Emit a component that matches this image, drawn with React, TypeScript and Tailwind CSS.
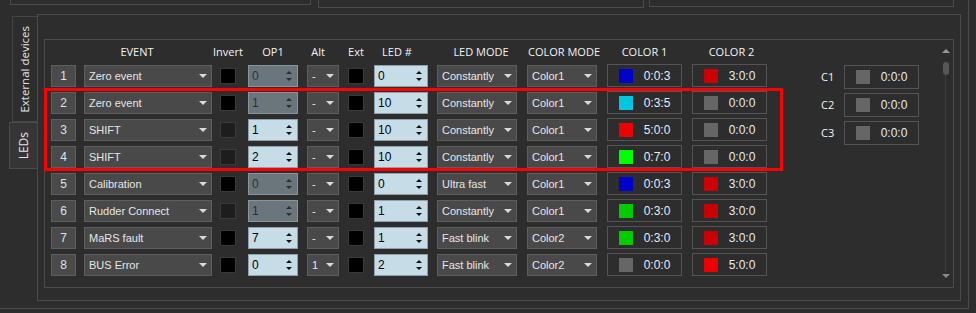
import React from "react";

type Row = {
  event: string;
  invertDim: boolean;
  op1: string;
  op1On: boolean;
  alt: string;
  led: string;
  mode: string;
  colorMode: string;
  c1: [string, string];
  c2: [string, string];
};

const GRAY = "#666666";

const rows: Row[] = [
  { event: "Zero event", invertDim: false, op1: "0", op1On: false, alt: "-", led: "0", mode: "Constantly", colorMode: "Color1", c1: ["#0000cc", "0:0:3"], c2: ["#cc0000", "3:0:0"] },
  { event: "Zero event", invertDim: false, op1: "1", op1On: false, alt: "-", led: "10", mode: "Constantly", colorMode: "Color1", c1: ["#00c6e0", "0:3:5"], c2: [GRAY, "0:0:0"] },
  { event: "SHIFT", invertDim: true, op1: "1", op1On: true, alt: "-", led: "10", mode: "Constantly", colorMode: "Color1", c1: ["#ee0000", "5:0:0"], c2: [GRAY, "0:0:0"] },
  { event: "SHIFT", invertDim: true, op1: "2", op1On: true, alt: "-", led: "10", mode: "Constantly", colorMode: "Color1", c1: ["#00ff00", "0:7:0"], c2: [GRAY, "0:0:0"] },
  { event: "Calibration", invertDim: false, op1: "0", op1On: false, alt: "-", led: "0", mode: "Ultra fast", colorMode: "Color1", c1: ["#0000cc", "0:0:3"], c2: ["#cc0000", "3:0:0"] },
  { event: "Rudder Connect", invertDim: true, op1: "1", op1On: false, alt: "-", led: "1", mode: "Constantly", colorMode: "Color1", c1: ["#00cc00", "0:3:0"], c2: ["#cc0000", "3:0:0"] },
  { event: "MaRS fault", invertDim: false, op1: "7", op1On: true, alt: "-", led: "1", mode: "Fast blink", colorMode: "Color2", c1: ["#00cc00", "0:3:0"], c2: ["#cc0000", "3:0:0"] },
  { event: "BUS Error", invertDim: false, op1: "0", op1On: true, alt: "1", led: "2", mode: "Fast blink", colorMode: "Color2", c1: [GRAY, "0:0:0"], c2: ["#ee0000", "5:0:0"] },
];

function Combo({ w, text }: { w: string; text: string }) {
  return (
    <div className={`${w} h-[22px] flex items-center justify-between bg-[#494949] border border-[#5e5e5e] pl-[4px] pr-[4px] text-[11px] text-[#e6e6e6] whitespace-nowrap`}>
      <span>{text}</span>
      <span className="w-0 h-0 border-x-[4px] border-x-transparent border-t-[4px] border-t-[#dadada]" />
    </div>
  );
}

function Check({ dim }: { dim?: boolean }) {
  return (
    <div className={`w-[16px] h-[16px] border border-[#3a3a3a] ${dim ? "bg-[#1d1d1d]" : "bg-black"}`} />
  );
}

function Spin({ w, value, on }: { w: string; value: string; on: boolean }) {
  const arrow = on ? "#111111" : "#2a2f32";
  return (
    <div
      className={`${w} h-[22px] flex items-center justify-between pl-[3px] pr-[5px] text-[12px] border ${
        on ? "bg-[#c6dde8] border-[#8fa1aa] text-black" : "bg-[#6b767c] border-[#8a959b] text-[#2c3134]"
      }`}
    >
      <span>{value}</span>
      <div className="flex flex-col items-center gap-[4px]">
        <span className="w-0 h-0 border-x-[3px] border-x-transparent border-b-[3px]" style={{ borderBottomColor: arrow }} />
        <span className="w-0 h-0 border-x-[3px] border-x-transparent border-t-[3px]" style={{ borderTopColor: arrow }} />
      </div>
    </div>
  );
}

function ColorBox({ color, value, h = "h-[23px]" }: { color: string; value: string; h?: string }) {
  return (
    <div className={`w-[75px] ${h} self-start flex items-center border border-[#545454] pl-[11px] text-[12px] text-[#e4ecf5]`}>
      <span className="w-[14px] h-[14px] shrink-0" style={{ backgroundColor: color }} />
      <span className="flex-1 text-center">{value}</span>
    </div>
  );
}

function Head({ w, label, extra = "" }: { w: string; label: string; extra?: string }) {
  return <div className={`${w} flex justify-center whitespace-nowrap ${extra}`}>{label}</div>;
}

export default function App() {
  return (
    <div className="relative w-[976px] h-[313px] bg-[#2d2d2d] overflow-hidden font-['Liberation_Sans',Arial,sans-serif]">
      <div className="w-[969px] h-[309px] border-r border-b border-[#4b4b4b] flex flex-col">
        {/* partly visible panels above */}
        <div className="h-[14px] flex shrink-0">
          <div className="ml-[10px] w-[301px] h-[5px] border-x border-b border-[#4b4b4b]" />
          <div className="ml-[7px] w-[326px] h-[8px] border-x border-b border-[#4b4b4b]" />
          <div className="ml-[5px] w-[305px] h-[7px] border-x border-b border-[#4b4b4b]" />
        </div>

        <div className="flex flex-1">
          {/* vertical tabs */}
          <div className="w-[37px] pt-[2px] flex flex-col items-end font-['Open_Sans',sans-serif] text-[11.5px] text-[#e2e2e2]">
            <div className="w-[25px] h-[106px] border-l border-t border-b border-[#454545] flex items-center justify-center">
              <span className="[writing-mode:vertical-rl] rotate-180 whitespace-nowrap">External devices</span>
            </div>
            <div className="w-[28px] h-[47px] bg-[#353535] border-l border-t border-b border-[#4b4b4b] flex items-center justify-center">
              <span className="[writing-mode:vertical-rl] rotate-180 whitespace-nowrap text-[12px]">LEDs</span>
            </div>
          </div>

          {/* tab panel */}
          <div className="w-[924px] h-[287px] border border-[#4b4b4b] pl-[6px] pt-[24px]">
            <div className="w-[910px] h-[249px] border border-[#4b4b4b] flex">
              {/* table */}
              <div className="pl-[6px] flex flex-col">
                <div className="h-[24px] flex items-center font-['Open_Sans',sans-serif] font-medium text-[11px] text-[#f2f2f2]">
                  <Head w="w-[25px]" label="" />
                  <Head w="w-[128px] ml-[8px]" label="EVENT" extra="pr-[22px]" />
                  <Head w="w-[16px] ml-[8px]" label="Invert" />
                  <Head w="w-[50px] ml-[12px]" label="OP1" />
                  <Head w="w-[32px] ml-[9px]" label="Alt" extra="pr-[10px]" />
                  <Head w="w-[16px] ml-[9px]" label="Ext" />
                  <Head w="w-[54px] ml-[10px]" label="LED #" extra="pr-[8px]" />
                  <Head w="w-[80px] ml-[9px]" label="LED MODE" extra="pl-[8px]" />
                  <Head w="w-[70px] ml-[10px]" label="COLOR MODE" extra="pl-[4px]" />
                  <Head w="w-[75px] ml-[10px]" label="COLOR 1" />
                  <Head w="w-[75px] ml-[10px]" label="COLOR 2" extra="pl-[4px]" />
                </div>

                {rows.map((r, i) => (
                  <div key={i} className="h-[24px] mb-[3px] flex items-center">
                    <div className="w-[25px] h-[22px] flex items-center justify-center bg-[#4a4a4a] border border-[#5e5e5e] text-[12px] text-[#d6e4f2]">
                      {i + 1}
                    </div>
                    <div className="ml-[8px]">
                      <Combo w="w-[128px]" text={r.event} />
                    </div>
                    <div className="ml-[8px]">
                      <Check dim={r.invertDim} />
                    </div>
                    <div className="ml-[12px]">
                      <Spin w="w-[50px]" value={r.op1} on={r.op1On} />
                    </div>
                    <div className="ml-[9px]">
                      <Combo w="w-[32px]" text={r.alt} />
                    </div>
                    <div className="ml-[9px]">
                      <Check />
                    </div>
                    <div className="ml-[10px]">
                      <Spin w="w-[54px]" value={r.led} on />
                    </div>
                    <div className="ml-[9px]">
                      <Combo w="w-[80px]" text={r.mode} />
                    </div>
                    <div className="ml-[10px]">
                      <Combo w="w-[70px]" text={r.colorMode} />
                    </div>
                    <div className="ml-[10px] self-start">
                      <ColorBox color={r.c1[0]} value={r.c1[1]} />
                    </div>
                    <div className="ml-[10px] self-start">
                      <ColorBox color={r.c2[0]} value={r.c2[1]} />
                    </div>
                  </div>
                ))}
              </div>

              {/* C1..C3 */}
              <div className="ml-[54px] pt-[25px] flex flex-col gap-[4px]">
                {["C1", "C2", "C3"].map((c) => (
                  <div key={c} className="h-[24px] flex items-center">
                    <span className="w-[23px] font-['Open_Sans',sans-serif] font-medium text-[11px] text-[#f2f2f2]">{c}</span>
                    <div className="w-[75px] h-[24px] flex items-center border border-[#545454] pl-[11px] text-[12px] text-[#e4ecf5]">
                      <span className="w-[14px] h-[14px] shrink-0 bg-[#666666]" />
                      <span className="flex-1 text-center">0:0:0</span>
                    </div>
                  </div>
                ))}
              </div>

              {/* scrollbar */}
              <div className="ml-[22px] w-[9px] pt-[9px] pb-[9px] flex flex-col items-center">
                <span className="w-0 h-0 border-x-[4px] border-x-transparent border-b-[4px] border-b-[#9a9a9a]" />
                <div className="mt-[9px] w-[6px] h-[13px] rounded-full bg-[#575757]" />
                <div className="flex-1 w-px bg-[#3c3c3c]" />
                <span className="mt-[2px] w-0 h-0 border-x-[4px] border-x-transparent border-t-[4px] border-t-[#8a8a8a]" />
              </div>
            </div>
          </div>
        </div>
      </div>

      {/* red highlight annotation */}
      <div className="absolute left-[44px] top-[88px] w-[739px] h-[83px] border-[3px] border-[#ff0000] pointer-events-none" />
    </div>
  );
}
